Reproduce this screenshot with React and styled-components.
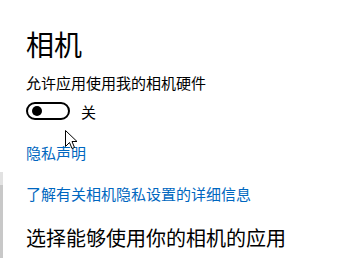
import React from "react";
import styled, { createGlobalStyle } from "styled-components";

const Global = createGlobalStyle`
  html, body { margin: 0; padding: 0; background: #fff; }
  body { font-family: "Noto Sans CJK SC", "Noto Sans", sans-serif; color: #000; }
`;

const Page = styled.div`
  position: relative;
  display: flex;
  width: 340px;
  height: 258px;
  overflow: hidden;
  background: #fff;
`;

const Edge = styled.div`
  width: 3px;
  display: flex;
  flex-direction: column;
  padding-top: 172px;
`;

const EdgeTop = styled.div`
  height: 13px;
  background: #e2e2e2;
`;

const EdgeBar = styled.div`
  flex: 1;
  background: #c8c8c8;
`;

const Content = styled.div`
  padding-left: 23px;
  padding-top: 30px;
  display: flex;
  flex-direction: column;
  align-items: flex-start;
`;

const Title = styled.h1`
  margin: 0;
  font-size: 28px;
  line-height: 28px;
  font-weight: 400;
`;

const Text = styled.div`
  margin-top: ${(p) => p.$mt}px;
  font-size: 15px;
  line-height: 15px;
`;

const ToggleRow = styled.div`
  margin-top: 12px;
  display: flex;
  align-items: center;
  gap: 11px;
`;

const Track = styled.div`
  box-sizing: border-box;
  width: 44px;
  height: 18px;
  border: 2px solid #000;
  border-radius: 9px;
  display: flex;
  align-items: center;
  padding-left: 4px;
`;

const Knob = styled.div`
  width: 10px;
  height: 10px;
  border-radius: 50%;
  background: #000;
`;

const ToggleLabel = styled.span`
  font-size: 15px;
  line-height: 15px;
`;

const Link = styled.a`
  margin-top: ${(p) => p.$mt}px;
  font-size: 15px;
  line-height: 15px;
  color: #0067c0;
  text-decoration: none;
`;

const SubTitle = styled.h2`
  margin: 27px 0 0;
  font-size: 20px;
  line-height: 20px;
  font-weight: 400;
`;

const Cursor = styled.svg`
  position: absolute;
  left: 65px;
  top: 130px;
`;

export default function App() {
  return (
    <>
      <Global />
      <Page>
        <Edge>
          <EdgeTop />
          <EdgeBar />
        </Edge>
        <Content>
          <Title>相机</Title>
          <Text $mt={17}>允许应用使用我的相机硬件</Text>
          <ToggleRow>
            <Track>
              <Knob />
            </Track>
            <ToggleLabel>关</ToggleLabel>
          </ToggleRow>
          <Link $mt={25}>隐私声明</Link>
          <Link $mt={26}>了解有关相机隐私设置的详细信息</Link>
          <SubTitle>选择能够使用你的相机的应用</SubTitle>
        </Content>
        <Cursor width="13" height="20" viewBox="0 0 13 20">
          <path
            d="M0.5 0.5 L0.5 16.5 L4.5 12.5 L7 18.5 L9.5 17.5 L7 11.5 L12 11.5 Z"
            fill="#fff"
            stroke="#000"
            strokeWidth="1"
            strokeLinejoin="miter"
          />
        </Cursor>
      </Page>
    </>
  );
}
